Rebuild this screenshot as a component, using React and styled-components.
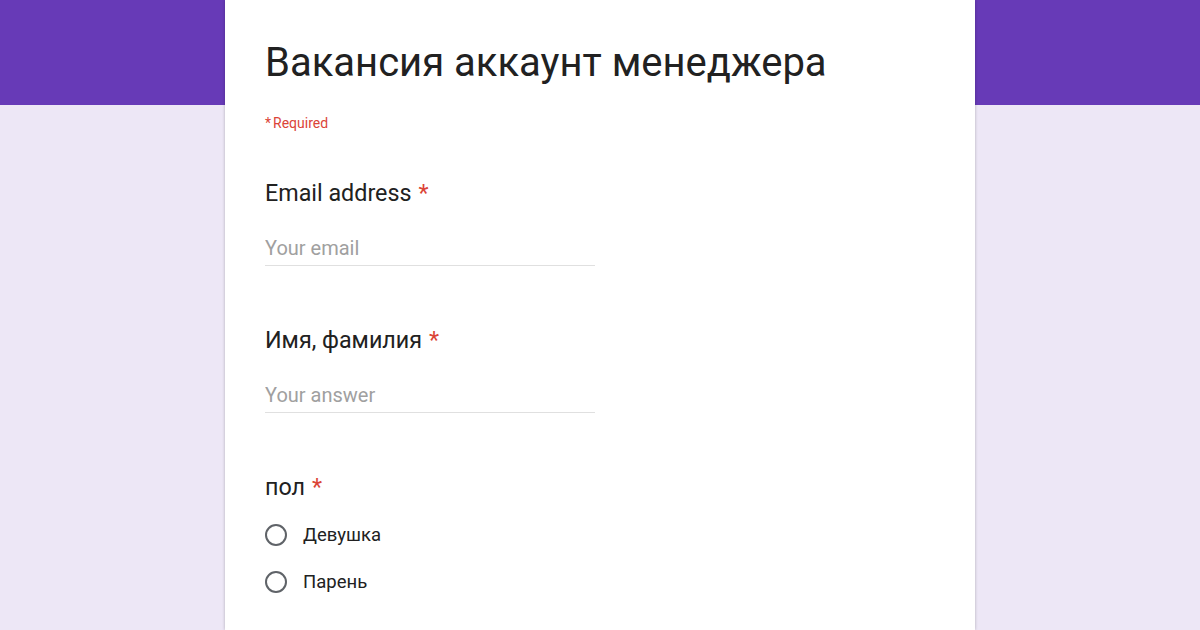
import React from "react";
import styled, { createGlobalStyle } from "styled-components";

const GlobalStyle = createGlobalStyle`
    html, body {
        margin: 0;
        padding: 0;
        height: 100%;
        overflow: hidden;
    }
    body {
        background: #ede7f6;
        font-family: Roboto, "Noto Sans", Arial, sans-serif;
    }
`;

const Page = styled.div`
    width: 1200px;
    height: 630px;
    background: linear-gradient(#673ab7 0, #673ab7 105px, #ede7f6 105px);
    display: flex;
    justify-content: center;
    overflow: hidden;
`;

const Card = styled.div`
    width: 750px;
    background: #fff;
    box-shadow: 0 0 3px rgba(0, 0, 0, 0.25);
    padding: 37px 40px 0;
    box-sizing: border-box;
`;

const Title = styled.h1`
    margin: 0;
    font-weight: 400;
    font-size: 40px;
    line-height: 52px;
    color: #212121;
`;

const RequiredNote = styled.div`
    margin-top: 26px;
    font-size: 14px;
    color: #db4437;

    b {
        font-weight: 400;
        margin-right: 2px;
    }
`;

const Question = styled.div`
    margin-top: ${(p) => p.$gap || 60}px;
`;

const Label = styled.div`
    font-size: 23.3px;
    line-height: 28px;
    color: #212121;

    span {
        color: #db4437;
        margin-left: 7px;
    }
`;

const Input = styled.input`
    display: block;
    margin-top: 29px;
    width: 330px;
    padding: 0 0 5px;
    border: none;
    border-bottom: 1px solid #e0e0e0;
    outline: none;
    font-family: inherit;
    font-size: 20px;
    color: #212121;

    &::placeholder {
        color: #a0a0a0;
    }
`;

const RadioRow = styled.label`
    display: flex;
    align-items: center;
    gap: 16px;
    margin-top: ${(p) => p.$gap}px;
    font-size: 18.5px;
    color: #212121;
`;

const Circle = styled.span`
    width: 18px;
    height: 18px;
    border: 2px solid #5f6368;
    border-radius: 50%;
`;

const App = () => (
    <Page>
        <GlobalStyle />
        <Card>
            <Title>Вакансия аккаунт менеджера</Title>
            <RequiredNote>
                <b>*</b>Required
            </RequiredNote>
            <Question $gap={48}>
                <Label>
                    Email address<span>*</span>
                </Label>
                <Input placeholder="Your email" />
            </Question>
            <Question>
                <Label>
                    Имя, фамилия<span>*</span>
                </Label>
                <Input placeholder="Your answer" />
            </Question>
            <Question>
                <Label>
                    пол<span>*</span>
                </Label>
                <RadioRow $gap={23}>
                    <Circle />
                    Девушка
                </RadioRow>
                <RadioRow $gap={25}>
                    <Circle />
                    Парень
                </RadioRow>
            </Question>
        </Card>
    </Page>
);

export default App;
